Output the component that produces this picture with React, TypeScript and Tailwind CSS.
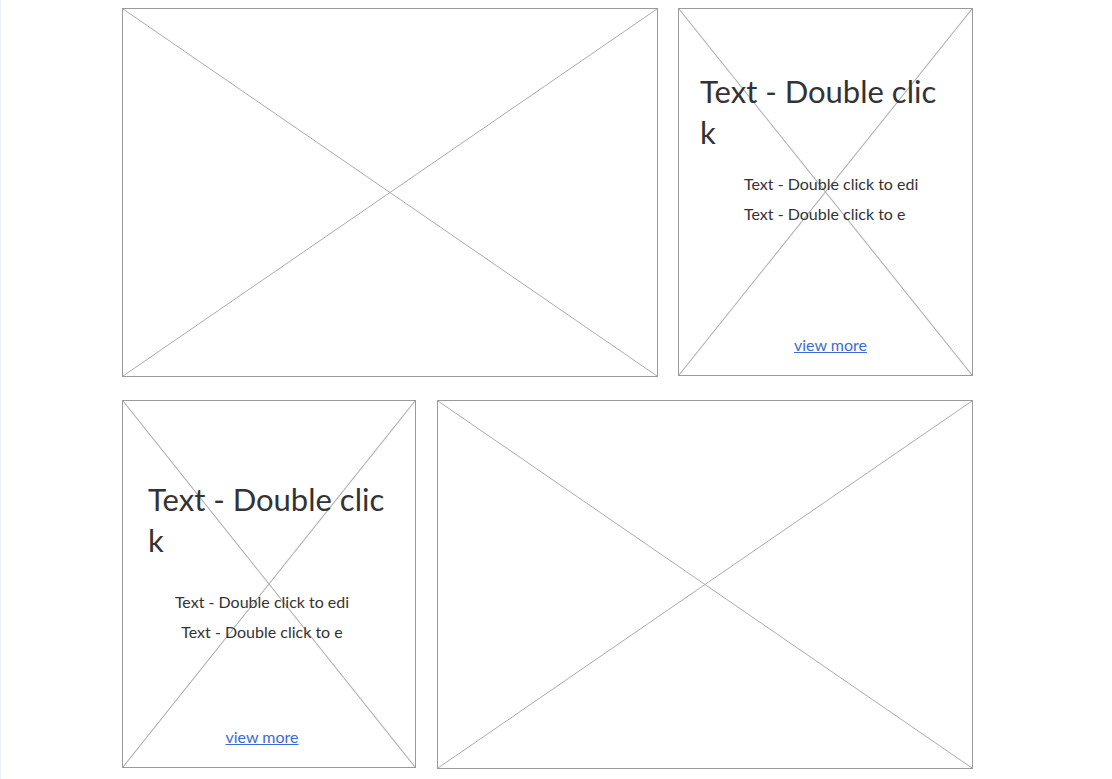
import React from "react";

function XLines() {
  return (
    <svg
      className="absolute inset-0 h-full w-full"
      viewBox="0 0 100 100"
      preserveAspectRatio="none"
      aria-hidden="true"
    >
      <line x1="0" y1="0" x2="100" y2="100" stroke="#ababab" strokeWidth="1" vectorEffect="non-scaling-stroke" />
      <line x1="100" y1="0" x2="0" y2="100" stroke="#ababab" strokeWidth="1" vectorEffect="non-scaling-stroke" />
    </svg>
  );
}

function ImageBox({ className }: { className: string }) {
  return (
    <div className={"relative border border-[#9a9a9a] bg-white " + className}>
      <XLines />
    </div>
  );
}

export default function App() {
  return (
    <div
      className="min-h-[779px] w-full border-l border-[#e9f0f7] bg-white text-[#333333]"
      style={{ fontFamily: "Lato, 'Noto Sans', sans-serif" }}
    >
      <div className="ml-[121px] flex w-[851px] flex-col gap-[23px] pt-[8px]">
        {/* Row 1 */}
        <div className="flex gap-[20px]">
          <ImageBox className="h-[369px] w-[536px]" />
          <div className="relative flex h-[368px] w-[295px] flex-col border border-[#9a9a9a] pb-[18px]">
            <XLines />
            <div className="relative mt-[62px] pl-[21px] text-[31px] leading-[41px]">
              <div>Text - Double clic</div>
              <div>k</div>
            </div>
            <div className="relative mt-[16px] pl-[65px] text-[16px] leading-[30px]">
              <div>Text - Double click to edi</div>
              <div>Text - Double click to e</div>
            </div>
            <div className="relative mt-auto pl-[10px] text-center text-[16px] leading-[24px]">
              <a href="#" className="text-[#3d6bd6] underline">view more</a>
            </div>
          </div>
        </div>
        {/* Row 2 */}
        <div className="flex gap-[21px]">
          <div className="relative flex h-[368px] w-[294px] flex-col border border-[#9a9a9a] pb-[18px]">
            <XLines />
            <div className="relative mt-[78px] pl-[25px] text-[31px] leading-[41px]">
              <div>Text - Double clic</div>
              <div>k</div>
            </div>
            <div className="relative mt-[26px] pr-[14px] text-center text-[16px] leading-[30px]">
              <div>Text - Double click to edi</div>
              <div>Text - Double click to e</div>
            </div>
            <div className="relative mt-auto pr-[14px] text-center text-[16px] leading-[24px]">
              <a href="#" className="text-[#3d6bd6] underline">view more</a>
            </div>
          </div>
          <ImageBox className="h-[369px] w-[536px]" />
        </div>
      </div>
    </div>
  );
}
